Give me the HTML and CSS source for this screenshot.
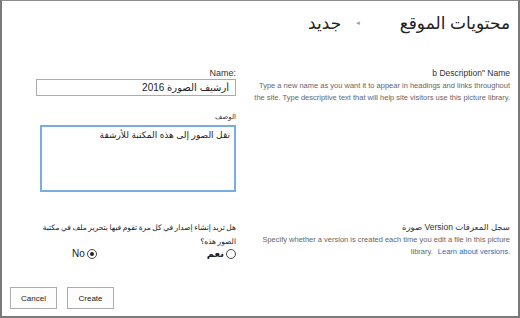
FILE: index.html
```html
<!DOCTYPE html>
<html lang="ar" dir="rtl">
<head>
    <meta charset="UTF-8">
    <title>جديد</title>
    <link rel="stylesheet" href="styles.css">
</head>
<body>
<div class="page">
    <div class="crumbs">
        <span class="crumb-site">محتويات الموقع</span>
        <span class="crumb-sep">◂</span>
        <span class="crumb-cur">جديد</span>
    </div>

    <div class="section">
        <div class="info">
            <div class="info-title" dir="ltr">b Description" Name</div>
            <p class="info-desc" dir="ltr">Type a new name as you want it to appear in headings and links throughout the site. Type descriptive text that will help site visitors use this picture library.</p>
        </div>
        <div class="fields">
            <div class="field-label" dir="ltr">Name:</div>
            <input class="text-box" type="text" value="أرشيف الصورة 2016">
            <div class="field-label desc-label">الوصف</div>
            <textarea class="text-area">نقل الصور إلى هذه المكتبة للأرشفة</textarea>
        </div>
    </div>

    <div class="section version">
        <div class="info">
            <div class="info-title">سجل المعرفات Version صورة</div>
            <p class="info-desc" dir="ltr">Specify whether a version is created each time you edit a file in this picture library. <a class="learn" href="#">Learn about versions.</a></p>
        </div>
        <div class="fields">
            <div class="question">هل تريد إنشاء إصدار في كل مرة تقوم فيها بتحرير ملف في مكتبة<br>الصور هذه؟</div>
            <div class="choices">
                <label class="choice"><input type="radio" name="ver"> <b>نعم</b></label>
                <label class="choice"><input type="radio" name="ver" checked> No</label>
            </div>
        </div>
    </div>

    <div class="actions">
        <button class="btn">Create</button>
        <button class="btn">Cancel</button>
    </div>
</div>
</body>
</html>
```

FILE: styles.css
```css
body {
    margin: 0;
    font-family: "Liberation Sans", "DejaVu Sans", sans-serif;
    color: #333;
}

.page {
    width: 520px;
    height: 318px;
    box-sizing: border-box;
    border: 2px solid #7a7a7a;
    border-top: 1px solid #8c8c8c;
    padding: 0 8px 0 0;
    display: flex;
    flex-direction: column;
}

.crumbs {
    display: flex;
    align-items: center;
    height: 42px;
    padding-top: 2px;
    box-sizing: border-box;
    color: #222;
}

.crumb-site,
.crumb-cur {
    font-size: 17px;
}

.crumb-sep {
    font-size: 7px;
    color: #9a9a9a;
    margin: 0 40px 0 15px;
}

.section {
    display: grid;
    grid-template-columns: 258px 200px;
    column-gap: 16px;
    margin-top: 24px;
}

.info-title {
    font-size: 8.5px;
    color: #333;
    text-align: right;
    line-height: 12px;
}

.info-desc {
    font-size: 7.5px;
    line-height: 12px;
    color: #666;
    text-align: right;
    margin: 1px 0 0;
}

.learn {
    display: inline-block;
    color: #1a6fc0;
    text-decoration: none;
    margin-left: 3px;
}

.field-label {
    font-size: 9px;
    line-height: 12px;
    text-align: right;
    color: #333;
}

.desc-label {
    font-size: 7px;
    margin-top: 15px;
}

.text-box {
    display: block;
    width: 200px;
    height: 17px;
    box-sizing: border-box;
    border: 1px solid #ababab;
    padding: 0 6px;
    font-family: inherit;
    font-size: 10px;
    color: #222;
    text-align: right;
    outline: none;
}

.text-area {
    display: block;
    width: 196px;
    height: 67px;
    box-sizing: border-box;
    margin: 2px 0 0 0;
    border: 2px solid #78ade2;
    padding: 3px 4px;
    font-family: inherit;
    font-size: 9px;
    color: #222;
    resize: none;
    outline: none;
}

.version {
    margin-top: 29px;
}

.question {
    font-size: 7.5px;
    word-spacing: -0.5px;
    line-height: 14px;
    color: #222;
}

.choices {
    display: flex;
    gap: 110px;
    margin-top: -1px;
}

.choice {
    display: flex;
    align-items: center;
    gap: 2px;
    font-size: 10px;
    color: #222;
}

.choice input {
    appearance: none;
    width: 10px;
    height: 10px;
    margin: 0;
    border: 1px solid #444;
    border-radius: 50%;
    background: #fff;
    display: grid;
    place-content: center;
}

.choice input:checked::before {
    content: "";
    width: 4px;
    height: 4px;
    border-radius: 50%;
    background: #222;
}

.actions {
    display: flex;
    justify-content: flex-end;
    gap: 10px;
    margin-top: auto;
    padding: 0 0 7px 8px;
}

.btn {
    width: 47px;
    height: 22px;
    border: 1px solid #ababab;
    background: #fdfdfd;
    font-family: inherit;
    font-size: 8px;
    color: #222;
    padding: 0;
}
```
